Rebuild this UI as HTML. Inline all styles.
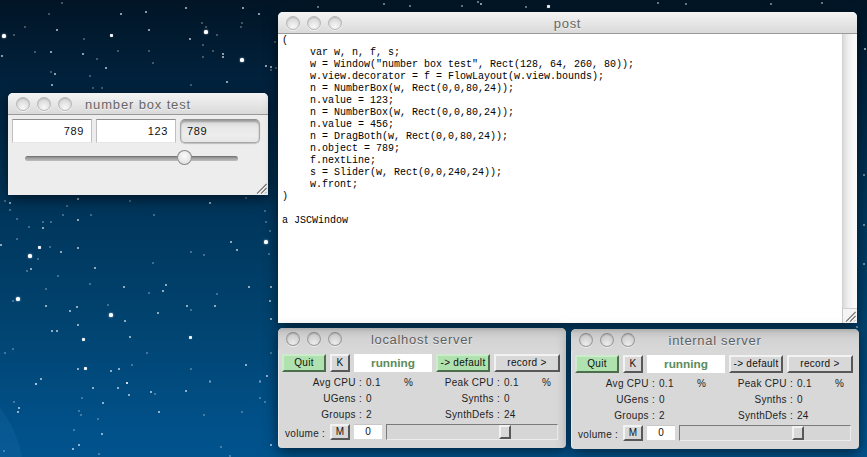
<!DOCTYPE html>
<html><head><meta charset="utf-8">
<style>
*{margin:0;padding:0;box-sizing:border-box}
html,body{width:867px;height:457px;overflow:hidden}
body{position:relative;font-family:"Liberation Sans",sans-serif;
background:linear-gradient(to bottom,#011525 0px,#01203a 70px,#00365c 215px,#01436f 320px,#01518a 430px,#01538d 457px);}
i{position:absolute;background:#fff;border-radius:1px;display:block}
.planet{position:absolute;left:-185px;top:369px;width:208px;height:208px;border-radius:50%;background:rgba(120,180,255,.07)}
.win{position:absolute;border-radius:5px 5px 0 0;box-shadow:0 4px 14px rgba(0,0,0,.55)}
.tb{position:absolute;left:0;top:0;right:0;height:22px;border-radius:5px 5px 0 0;
background:linear-gradient(#f4f4f4,#e6e6e6 50%,#d8d8d8);}
.tbline{position:absolute;left:0;right:0;top:21px;height:1px;background:#9a9a9a}
.ttl{position:absolute;left:0;right:0;top:4px;text-align:center;font-size:13px;color:#676767;letter-spacing:.7px;text-shadow:0 1px 0 rgba(255,255,255,.6)}
.cb{position:absolute;top:4px;width:14px;height:14px;border-radius:50%;border:1px solid #b8b8b8;background:radial-gradient(circle at 50% 80%,#f8f8f8 0,#e4e4e4 45%,#cdcdcd 100%);box-shadow:inset 0 1px 1px rgba(0,0,0,.14),0 1px 0 rgba(255,255,255,.6)}
.code{position:absolute;tab-size:28px;-moz-tab-size:28px;font-family:"Liberation Mono",monospace;font-size:10px;line-height:12px;white-space:pre;color:#000}
.btn{position:absolute;white-space:nowrap;overflow:hidden;height:18px;font-size:10px;letter-spacing:.3px;text-align:center;line-height:14px;color:#111;border-top:2px solid #f2f2f2;border-left:2px solid #f2f2f2;border-right:2px solid #585858;border-bottom:2px solid #585858;background:#d8d8d8}
.btn.g{background:#afe2af;border-top-color:#cdeccd;border-left-color:#cdeccd;border-right-color:#4c6e4c;border-bottom-color:#4c6e4c}
.lbl{position:absolute;font-size:10px;letter-spacing:.3px;color:#1e1e1e;line-height:14px;white-space:nowrap}
.r{text-align:right}.r{letter-spacing:.3px}
.srv{width:288px;height:120px;background:#d8d8d8;border-radius:5px 5px 4px 4px;box-shadow:0 4px 14px rgba(0,0,0,.55),inset 2px 0 1px -1px rgba(255,255,255,.45)}
.stb{position:absolute;left:0;top:0;right:0;height:22px;border-radius:5px 5px 0 0;background:linear-gradient(#acacac,#c6c6c6 4px,#d3d3d3 10px,#d8d8d8 22px)}
.run{position:absolute;left:76px;top:26px;width:78px;height:18px;background:#fff;color:#5a8c5a;font-size:11.8px;font-weight:bold;text-align:center;line-height:18px}
.vnum{position:absolute;left:76px;top:96px;width:28px;height:15px;background:#fff;border-top:1px solid #c8c8c8;font-size:10px;text-align:center;line-height:14px;color:#111}
.vsl{position:absolute;left:108px;top:96px;width:172px;height:16px;background:#d6d6d6;border-top:1px solid #7a7a7a;border-left:1px solid #7a7a7a;border-right:1px solid #ececec;border-bottom:1px solid #ececec}
.cbs{border-color:#9a9a9a;border-top-color:#888;background:radial-gradient(circle at 50% 85%,#ececec 0,#d6d6d6 50%,#c2c2c2 100%)}
</style></head><body>

<!-- stars -->
<div class="planet"></div>
<i style="left:1.7px;top:33.8px;width:4px;height:4px;opacity:1.0;border-radius:40%;box-shadow:0 0 2px rgba(220,235,255,.8)"></i>
<i style="left:12.5px;top:34.0px;width:2px;height:2px;opacity:0.35;"></i>
<i style="left:23.5px;top:25.6px;width:2px;height:2px;opacity:0.35;"></i>
<i style="left:47.9px;top:12.5px;width:2px;height:2px;opacity:0.35;"></i>
<i style="left:61.0px;top:1.9px;width:2px;height:2px;opacity:0.35;"></i>
<i style="left:55.5px;top:28.5px;width:2px;height:2px;opacity:0.75;"></i>
<i style="left:119.6px;top:12.5px;width:2px;height:2px;opacity:0.75;"></i>
<i style="left:110.1px;top:34.3px;width:3px;height:3px;opacity:0.95;box-shadow:0 0 1px rgba(220,235,255,.7)"></i>
<i style="left:83.2px;top:37.5px;width:2px;height:2px;opacity:0.35;"></i>
<i style="left:1.0px;top:55.0px;width:2px;height:2px;opacity:0.75;"></i>
<i style="left:34.3px;top:51.0px;width:2px;height:2px;opacity:0.35;"></i>
<i style="left:50.0px;top:51.4px;width:2px;height:2px;opacity:0.75;"></i>
<i style="left:82.0px;top:52.6px;width:2px;height:2px;opacity:0.75;"></i>
<i style="left:95.7px;top:57.8px;width:2px;height:2px;opacity:0.35;"></i>
<i style="left:116.5px;top:50.0px;width:2px;height:2px;opacity:0.35;"></i>
<i style="left:105.0px;top:67.2px;width:2px;height:2px;opacity:0.75;"></i>
<i style="left:54.0px;top:73.4px;width:2px;height:2px;opacity:0.75;"></i>
<i style="left:50.0px;top:71.3px;width:2px;height:2px;opacity:0.35;"></i>
<i style="left:88.8px;top:74.9px;width:2px;height:2px;opacity:0.35;"></i>
<i style="left:51.4px;top:84.2px;width:2px;height:2px;opacity:0.75;"></i>
<i style="left:91.5px;top:87.4px;width:2px;height:2px;opacity:0.35;"></i>
<i style="left:100.9px;top:87.4px;width:2px;height:2px;opacity:0.35;"></i>
<i style="left:144.8px;top:11.0px;width:2px;height:2px;opacity:0.75;"></i>
<i style="left:184.7px;top:7.3px;width:2px;height:2px;opacity:0.75;"></i>
<i style="left:242.0px;top:7.3px;width:2px;height:2px;opacity:0.75;"></i>
<i style="left:258.0px;top:12.5px;width:2px;height:2px;opacity:0.75;"></i>
<i style="left:147.7px;top:28.5px;width:2px;height:2px;opacity:0.75;"></i>
<i style="left:203.5px;top:30.2px;width:4px;height:4px;opacity:1.0;border-radius:40%;box-shadow:0 0 2px rgba(220,235,255,.8)"></i>
<i style="left:201.0px;top:21.5px;width:2px;height:2px;opacity:0.35;"></i>
<i style="left:205.0px;top:25.6px;width:2px;height:2px;opacity:0.35;"></i>
<i style="left:216.0px;top:34.0px;width:2px;height:2px;opacity:0.35;"></i>
<i style="left:239.8px;top:25.6px;width:2px;height:2px;opacity:0.35;"></i>
<i style="left:240.9px;top:21.5px;width:2px;height:2px;opacity:0.35;"></i>
<i style="left:189.0px;top:37.5px;width:2px;height:2px;opacity:0.75;"></i>
<i style="left:147.7px;top:50.0px;width:2px;height:2px;opacity:0.35;"></i>
<i style="left:202.4px;top:44.3px;width:2px;height:2px;opacity:0.35;"></i>
<i style="left:211.8px;top:50.0px;width:2px;height:2px;opacity:0.35;"></i>
<i style="left:222.0px;top:52.6px;width:2px;height:2px;opacity:0.75;"></i>
<i style="left:222.0px;top:55.5px;width:2px;height:2px;opacity:0.75;"></i>
<i style="left:202.4px;top:55.5px;width:2px;height:2px;opacity:0.35;"></i>
<i style="left:151.9px;top:61.8px;width:2px;height:2px;opacity:0.35;"></i>
<i style="left:239.5px;top:58.3px;width:4px;height:4px;opacity:1.0;border-radius:40%;box-shadow:0 0 2px rgba(220,235,255,.8)"></i>
<i style="left:264.8px;top:64.5px;width:2px;height:2px;opacity:0.75;"></i>
<i style="left:270.4px;top:66.0px;width:2px;height:2px;opacity:0.75;"></i>
<i style="left:270.0px;top:68.6px;width:2px;height:2px;opacity:0.35;"></i>
<i style="left:275.0px;top:66.6px;width:2px;height:2px;opacity:0.35;"></i>
<i style="left:274.0px;top:40.6px;width:2px;height:2px;opacity:0.35;"></i>
<i style="left:226.0px;top:80.5px;width:2px;height:2px;opacity:0.75;"></i>
<i style="left:190.0px;top:84.2px;width:2px;height:2px;opacity:0.35;"></i>
<i style="left:28.1px;top:253.9px;width:4px;height:4px;opacity:1.0;border-radius:40%;box-shadow:0 0 2px rgba(220,235,255,.8)"></i>
<i style="left:37.5px;top:245.5px;width:3px;height:3px;opacity:0.95;box-shadow:0 0 1px rgba(220,235,255,.7)"></i>
<i style="left:9.0px;top:201.9px;width:2px;height:2px;opacity:0.75;"></i>
<i style="left:9.4px;top:209.0px;width:2px;height:2px;opacity:0.35;"></i>
<i style="left:3.6px;top:200.2px;width:2px;height:2px;opacity:0.35;"></i>
<i style="left:77.0px;top:197.7px;width:2px;height:2px;opacity:0.75;"></i>
<i style="left:66.0px;top:205.4px;width:2px;height:2px;opacity:0.35;"></i>
<i style="left:61.8px;top:213.8px;width:2px;height:2px;opacity:0.35;"></i>
<i style="left:90.0px;top:213.8px;width:2px;height:2px;opacity:0.35;"></i>
<i style="left:77.0px;top:219.4px;width:2px;height:2px;opacity:0.75;"></i>
<i style="left:15.6px;top:218.0px;width:2px;height:2px;opacity:0.35;"></i>
<i style="left:27.7px;top:225.6px;width:2px;height:2px;opacity:0.35;"></i>
<i style="left:42.2px;top:221.4px;width:2px;height:2px;opacity:0.35;"></i>
<i style="left:50.0px;top:221.4px;width:2px;height:2px;opacity:0.35;"></i>
<i style="left:42.2px;top:226.8px;width:2px;height:2px;opacity:0.75;"></i>
<i style="left:15.6px;top:237.7px;width:2px;height:2px;opacity:0.35;"></i>
<i style="left:0.0px;top:244.3px;width:2px;height:2px;opacity:0.75;"></i>
<i style="left:49.0px;top:245.6px;width:2px;height:2px;opacity:0.35;"></i>
<i style="left:59.7px;top:251.2px;width:2px;height:2px;opacity:0.75;"></i>
<i style="left:77.0px;top:247.0px;width:2px;height:2px;opacity:0.75;"></i>
<i style="left:36.8px;top:258.0px;width:2px;height:2px;opacity:0.35;"></i>
<i style="left:29.8px;top:268.4px;width:2px;height:2px;opacity:0.75;"></i>
<i style="left:26.0px;top:269.9px;width:2px;height:2px;opacity:0.35;"></i>
<i style="left:56.8px;top:275.0px;width:2px;height:2px;opacity:0.35;"></i>
<i style="left:94.2px;top:267.2px;width:2px;height:2px;opacity:0.75;"></i>
<i style="left:88.8px;top:283.0px;width:2px;height:2px;opacity:0.35;"></i>
<i style="left:122.7px;top:285.5px;width:2px;height:2px;opacity:0.75;"></i>
<i style="left:44.7px;top:287.5px;width:2px;height:2px;opacity:0.35;"></i>
<i style="left:129.0px;top:200.2px;width:2px;height:2px;opacity:0.35;"></i>
<i style="left:263.8px;top:239.8px;width:4px;height:4px;opacity:1.0;border-radius:40%;box-shadow:0 0 2px rgba(220,235,255,.8)"></i>
<i style="left:208.6px;top:201.9px;width:2px;height:2px;opacity:0.75;"></i>
<i style="left:152.5px;top:213.8px;width:2px;height:2px;opacity:0.35;"></i>
<i style="left:263.7px;top:209.6px;width:2px;height:2px;opacity:0.35;"></i>
<i style="left:264.8px;top:221.4px;width:2px;height:2px;opacity:0.35;"></i>
<i style="left:269.0px;top:229.8px;width:2px;height:2px;opacity:0.35;"></i>
<i style="left:230.0px;top:240.8px;width:2px;height:2px;opacity:0.75;"></i>
<i style="left:235.7px;top:248.5px;width:2px;height:2px;opacity:0.75;"></i>
<i style="left:190.0px;top:251.2px;width:2px;height:2px;opacity:0.35;"></i>
<i style="left:203.4px;top:253.9px;width:2px;height:2px;opacity:0.35;"></i>
<i style="left:267.5px;top:252.6px;width:2px;height:2px;opacity:0.35;"></i>
<i style="left:151.5px;top:261.6px;width:2px;height:2px;opacity:0.35;"></i>
<i style="left:165.0px;top:284.4px;width:2px;height:2px;opacity:0.75;"></i>
<i style="left:247.5px;top:285.5px;width:2px;height:2px;opacity:0.75;"></i>
<i style="left:270.0px;top:285.5px;width:2px;height:2px;opacity:0.75;"></i>
<i style="left:245.0px;top:196.5px;width:2px;height:2px;opacity:0.35;"></i>
<i style="left:15.7px;top:296.7px;width:4px;height:4px;opacity:1.0;border-radius:40%;box-shadow:0 0 2px rgba(220,235,255,.8)"></i>
<i style="left:11.5px;top:300.4px;width:2px;height:2px;opacity:0.35;"></i>
<i style="left:44.7px;top:304.6px;width:2px;height:2px;opacity:0.75;"></i>
<i style="left:68.6px;top:309.8px;width:2px;height:2px;opacity:0.75;"></i>
<i style="left:75.5px;top:305.6px;width:2px;height:2px;opacity:0.75;"></i>
<i style="left:107.0px;top:303.6px;width:2px;height:2px;opacity:0.35;"></i>
<i style="left:108.6px;top:313.0px;width:4px;height:4px;opacity:1.0;border-radius:40%;box-shadow:0 0 2px rgba(220,235,255,.8)"></i>
<i style="left:123.7px;top:320.2px;width:2px;height:2px;opacity:0.75;"></i>
<i style="left:77.0px;top:324.3px;width:2px;height:2px;opacity:0.75;"></i>
<i style="left:51.4px;top:329.7px;width:2px;height:2px;opacity:0.75;"></i>
<i style="left:55.5px;top:329.7px;width:2px;height:2px;opacity:0.75;"></i>
<i style="left:81.7px;top:338.4px;width:3px;height:3px;opacity:0.95;box-shadow:0 0 1px rgba(220,235,255,.7)"></i>
<i style="left:129.0px;top:336.4px;width:2px;height:2px;opacity:0.75;"></i>
<i style="left:11.5px;top:348.3px;width:2px;height:2px;opacity:0.35;"></i>
<i style="left:3.6px;top:352.4px;width:2px;height:2px;opacity:0.35;"></i>
<i style="left:83.7px;top:367.1px;width:3px;height:3px;opacity:0.95;box-shadow:0 0 1px rgba(220,235,255,.7)"></i>
<i style="left:77.0px;top:367.6px;width:2px;height:2px;opacity:0.75;"></i>
<i style="left:110.2px;top:369.7px;width:2px;height:2px;opacity:0.75;"></i>
<i style="left:118.0px;top:367.6px;width:2px;height:2px;opacity:0.75;"></i>
<i style="left:131.0px;top:364.3px;width:2px;height:2px;opacity:0.35;"></i>
<i style="left:39.5px;top:378.0px;width:2px;height:2px;opacity:0.75;"></i>
<i style="left:125.8px;top:381.5px;width:2px;height:2px;opacity:0.75;"></i>
<i style="left:35.4px;top:383.0px;width:2px;height:2px;opacity:0.35;"></i>
<i style="left:147.7px;top:291.5px;width:2px;height:2px;opacity:0.35;"></i>
<i style="left:162.3px;top:290.0px;width:2px;height:2px;opacity:0.75;"></i>
<i style="left:215.5px;top:292.7px;width:2px;height:2px;opacity:0.35;"></i>
<i style="left:269.0px;top:300.4px;width:2px;height:2px;opacity:0.75;"></i>
<i style="left:186.4px;top:304.6px;width:2px;height:2px;opacity:0.75;"></i>
<i style="left:190.0px;top:308.8px;width:2px;height:2px;opacity:0.35;"></i>
<i style="left:214.3px;top:304.6px;width:2px;height:2px;opacity:0.75;"></i>
<i style="left:156.7px;top:312.3px;width:2px;height:2px;opacity:0.75;"></i>
<i style="left:270.0px;top:317.7px;width:2px;height:2px;opacity:0.75;"></i>
<i style="left:188.5px;top:335.9px;width:3px;height:3px;opacity:0.95;box-shadow:0 0 1px rgba(220,235,255,.7)"></i>
<i style="left:146.3px;top:352.4px;width:2px;height:2px;opacity:0.35;"></i>
<i style="left:270.0px;top:352.4px;width:2px;height:2px;opacity:0.35;"></i>
<i style="left:245.4px;top:364.3px;width:2px;height:2px;opacity:0.75;"></i>
<i style="left:190.0px;top:368.4px;width:2px;height:2px;opacity:0.35;"></i>
<i style="left:265.8px;top:375.3px;width:2px;height:2px;opacity:0.75;"></i>
<i style="left:208.6px;top:380.0px;width:2px;height:2px;opacity:0.35;"></i>
<i style="left:258.5px;top:380.0px;width:2px;height:2px;opacity:0.35;"></i>
<i style="left:35.2px;top:383.2px;width:2px;height:2px;opacity:0.75;"></i>
<i style="left:92.4px;top:387.0px;width:2px;height:2px;opacity:0.75;"></i>
<i style="left:116.8px;top:387.0px;width:2px;height:2px;opacity:0.75;"></i>
<i style="left:126.0px;top:382.0px;width:2px;height:2px;opacity:0.75;"></i>
<i style="left:127.8px;top:393.8px;width:2px;height:2px;opacity:0.75;"></i>
<i style="left:80.6px;top:396.7px;width:2px;height:2px;opacity:0.35;"></i>
<i style="left:102.0px;top:401.7px;width:2px;height:2px;opacity:0.75;"></i>
<i style="left:12.5px;top:400.5px;width:2px;height:2px;opacity:0.35;"></i>
<i style="left:17.9px;top:407.3px;width:2px;height:2px;opacity:0.75;"></i>
<i style="left:16.7px;top:411.3px;width:2px;height:2px;opacity:0.75;"></i>
<i style="left:78.0px;top:410.0px;width:2px;height:2px;opacity:0.35;"></i>
<i style="left:79.8px;top:414.0px;width:2px;height:2px;opacity:0.35;"></i>
<i style="left:96.6px;top:417.7px;width:2px;height:2px;opacity:0.35;"></i>
<i style="left:73.0px;top:428.7px;width:2px;height:2px;opacity:0.35;"></i>
<i style="left:100.9px;top:432.5px;width:2px;height:2px;opacity:0.75;"></i>
<i style="left:77.8px;top:444.3px;width:2px;height:2px;opacity:0.75;"></i>
<i style="left:71.7px;top:448.4px;width:2px;height:2px;opacity:0.75;"></i>
<i style="left:3.2px;top:449.7px;width:2px;height:2px;opacity:0.35;"></i>
<i style="left:98.3px;top:453.0px;width:2px;height:2px;opacity:0.35;"></i>
<i style="left:150.0px;top:391.0px;width:2px;height:2px;opacity:0.75;"></i>
<i style="left:154.0px;top:392.5px;width:2px;height:2px;opacity:0.35;"></i>
<i style="left:184.8px;top:390.0px;width:2px;height:2px;opacity:0.75;"></i>
<i style="left:208.9px;top:380.7px;width:2px;height:2px;opacity:0.35;"></i>
<i style="left:258.5px;top:380.7px;width:2px;height:2px;opacity:0.35;"></i>
<i style="left:259.4px;top:396.7px;width:2px;height:2px;opacity:0.35;"></i>
<i style="left:263.6px;top:400.5px;width:2px;height:2px;opacity:0.35;"></i>
<i style="left:157.9px;top:411.3px;width:2px;height:2px;opacity:0.75;"></i>
<i style="left:203.3px;top:413.5px;width:2px;height:2px;opacity:0.35;"></i>
<i style="left:240.9px;top:411.0px;width:2px;height:2px;opacity:0.35;"></i>
<i style="left:219.5px;top:445.5px;width:2px;height:2px;opacity:0.35;"></i>
<i style="left:270.0px;top:444.3px;width:2px;height:2px;opacity:0.75;"></i>
<i style="left:229.0px;top:455.0px;width:2px;height:2px;opacity:0.35;"></i>
<i style="left:863.5px;top:48.0px;width:2px;height:2px;opacity:0.75;"></i>
<i style="left:863.0px;top:174.0px;width:2px;height:2px;opacity:0.55;"></i>
<i style="left:863.0px;top:224.0px;width:2px;height:2px;opacity:0.55;"></i>
<i style="left:863.0px;top:263.0px;width:2px;height:2px;opacity:0.55;"></i>
<i style="left:317.4px;top:6.0px;width:2px;height:2px;opacity:0.55;"></i>
<i style="left:383.0px;top:3.0px;width:2px;height:2px;opacity:0.55;"></i>
<i style="left:409.0px;top:5.0px;width:2px;height:2px;opacity:0.55;"></i>
<i style="left:461.0px;top:5.0px;width:2px;height:2px;opacity:0.55;"></i>
<i style="left:476.6px;top:0.7px;width:2px;height:2px;opacity:0.55;"></i>
<i style="left:480.0px;top:3.0px;width:2px;height:2px;opacity:0.75;"></i>
<i style="left:525.0px;top:6.0px;width:2px;height:2px;opacity:0.55;"></i>
<i style="left:547.0px;top:4.7px;width:3px;height:3px;opacity:0.95;box-shadow:0 0 1px rgba(220,235,255,.7)"></i>
<i style="left:656.5px;top:1.8px;width:2px;height:2px;opacity:0.55;"></i>
<i style="left:685.0px;top:2.5px;width:2px;height:2px;opacity:0.55;"></i>
<i style="left:770.0px;top:2.5px;width:2px;height:2px;opacity:0.55;"></i>
<i style="left:821.0px;top:1.8px;width:2px;height:2px;opacity:0.55;"></i>
<i style="left:855.6px;top:325.7px;width:2px;height:2px;opacity:0.55;"></i>
<!-- number box test window -->
<div class="win" style="left:8px;top:93px;width:260px;height:102px;background:#ededed">
  <div class="tb"></div><div class="tbline"></div>
  <div class="cb" style="left:8px;top:4px"></div>
  <div class="cb" style="left:29px;top:4px"></div>
  <div class="cb" style="left:50px;top:4px"></div>
  <div class="ttl" style="letter-spacing:.85px">number box test</div>
  <!-- number boxes -->
  <div style="position:absolute;left:4px;top:26px;width:80px;height:24px;background:#fff;border:1px solid #c0c0c0;border-top-color:#8e8e8e;border-bottom-color:#e6e6e6;font-size:11px;letter-spacing:.6px;text-align:right;padding-right:7px;line-height:23px;color:#111">789</div>
  <div style="position:absolute;left:88px;top:26px;width:80px;height:24px;background:#fff;border:1px solid #c0c0c0;border-top-color:#8e8e8e;border-bottom-color:#e6e6e6;font-size:11px;letter-spacing:.6px;text-align:right;padding-right:7px;line-height:23px;color:#111">123</div>
  <div style="position:absolute;left:172px;top:26px;width:80px;height:24px;border-radius:5px;background:linear-gradient(#d6d6d6,#e8e8e8 35%,#ededed 70%,#e6e6e6);box-shadow:inset 0 2px 2px rgba(0,0,0,.28),0 1px 1px rgba(0,0,0,.2);border:1px solid #a8a8a8;border-top-color:#909090;font-size:11px;letter-spacing:.6px;padding-left:6px;line-height:23px;color:#111">789</div>
  <!-- slider -->
  <div style="position:absolute;left:17px;top:63px;width:213px;height:5px;border-radius:3px;background:linear-gradient(#6a6a6a,#9a9a9a 35%,#aeaeae 70%,#bdbdbd)"></div>
  <div style="position:absolute;left:169px;top:57px;width:15px;height:15px;border-radius:50%;background:radial-gradient(circle at 50% 40%,#fafafa 0,#e8e8e8 50%,#cfcfcf 100%);box-shadow:inset 0 0 0 1px #8a8a8a"></div>
  <!-- grip -->
  <svg style="position:absolute;right:0;bottom:0" width="12" height="12"><path d="M1.6 11.4 L11 2 M5.6 11.4 L11 6 M9.6 11.4 L11 10" stroke="#fff" stroke-opacity=".8" stroke-width="1"/><path d="M1 10.6 L10.6 1 M5 10.6 L10.6 5" stroke="#6e6e6e" stroke-width="1.1"/><path d="M9 10.6 L10.6 9" stroke="#b0b0b0" stroke-width="1"/></svg>
</div>

<!-- post window -->
<div class="win" style="left:278px;top:12px;width:579px;height:311px;background:#fff">
  <div class="tb"></div><div class="tbline"></div>
  <div class="cb" style="left:8px;top:4px"></div>
  <div class="cb" style="left:29px;top:4px"></div>
  <div class="cb" style="left:50px;top:4px"></div>
  <div class="ttl">post</div>
  <div style="position:absolute;left:564px;top:22px;width:15px;bottom:15px;background:linear-gradient(to right,#dadada,#eeeeee 35%,#f8f8f8 70%,#fbfbfb);border-left:1px solid #d2d2d2"></div>
  <div style="position:absolute;left:564px;bottom:0;width:15px;height:15px;background:#f4f4f4;border-left:1px solid #c8c8c8;border-top:1px solid #d0d0d0"></div>
  <svg style="position:absolute;right:0;bottom:0" width="12" height="12"><path d="M1.6 11.4 L11 2 M5.6 11.4 L11 6 M9.6 11.4 L11 10" stroke="#fff" stroke-opacity=".8" stroke-width="1"/><path d="M1 10.6 L10.6 1 M5 10.6 L10.6 5" stroke="#6e6e6e" stroke-width="1.1"/><path d="M9 10.6 L10.6 9" stroke="#b0b0b0" stroke-width="1"/></svg>
  <div class="code" style="left:4px;top:23px">(
	var w, n, f, s;
	w = Window("number box test", Rect(128, 64, 260, 80));
	w.view.decorator = f = FlowLayout(w.view.bounds);
	n = NumberBox(w, Rect(0,0,80,24));
	n.value = 123;
	n = NumberBox(w, Rect(0,0,80,24));
	n.value = 456;
	n = DragBoth(w, Rect(0,0,80,24));
	n.object = 789;
	f.nextLine;
	s = Slider(w, Rect(0,0,240,24));
	w.front;
)

a JSCWindow</div>
</div>

<div class="win srv" style="left:278px;top:328px">
<div class="stb"></div>
<div class="cb cbs" style="left:8px;top:4px"></div>
<div class="cb cbs" style="left:29px;top:4px"></div>
<div class="cb cbs" style="left:50px;top:4px"></div>
<div class="ttl" style="color:#5e5e5e">localhost server</div>
<div class="btn g" style="left:4px;top:26px;width:44px">Quit</div>
<div class="btn" style="left:52px;top:26px;width:20px">K</div>
<div class="run">running</div>
<div class="btn g" style="left:158px;top:26px;width:54px">-&gt; default</div>
<div class="btn" style="left:216px;top:26px;width:66px">record &gt;</div>
<div class="lbl r" style="left:4px;top:48px;width:80px">Avg CPU :</div>
<div class="lbl" style="left:88px;top:48px">0.1</div>
<div class="lbl" style="left:126px;top:48px">%</div>
<div class="lbl r" style="left:142px;top:48px;width:80px">Peak CPU :</div>
<div class="lbl" style="left:226px;top:48px">0.1</div>
<div class="lbl" style="left:264px;top:48px">%</div>
<div class="lbl r" style="left:4px;top:64px;width:80px">UGens :</div>
<div class="lbl" style="left:88px;top:64px">0</div>
<div class="lbl r" style="left:142px;top:64px;width:80px">Synths :</div>
<div class="lbl" style="left:226px;top:64px">0</div>
<div class="lbl r" style="left:4px;top:80px;width:80px">Groups :</div>
<div class="lbl" style="left:88px;top:80px">2</div>
<div class="lbl r" style="left:142px;top:80px;width:80px">SynthDefs :</div>
<div class="lbl" style="left:226px;top:80px">24</div>
<div class="lbl" style="left:7px;top:98.5px">volume :</div>
<div class="btn" style="left:52px;top:96px;width:20px;height:16px;line-height:12px">M</div>
<div class="vnum">0</div>
<div class="vsl"></div>
<div class="btn" style="left:221px;top:97px;width:12px;height:14px"></div>
</div>
<div class="win srv" style="left:571px;top:329px">
<div class="stb"></div>
<div class="cb cbs" style="left:8px;top:4px"></div>
<div class="cb cbs" style="left:29px;top:4px"></div>
<div class="cb cbs" style="left:50px;top:4px"></div>
<div class="ttl" style="color:#5e5e5e">internal server</div>
<div class="btn g" style="left:4px;top:26px;width:44px">Quit</div>
<div class="btn" style="left:52px;top:26px;width:20px">K</div>
<div class="run">running</div>
<div class="btn" style="left:158px;top:26px;width:54px">-&gt; default</div>
<div class="btn" style="left:216px;top:26px;width:66px">record &gt;</div>
<div class="lbl r" style="left:4px;top:48px;width:80px">Avg CPU :</div>
<div class="lbl" style="left:88px;top:48px">0.1</div>
<div class="lbl" style="left:126px;top:48px">%</div>
<div class="lbl r" style="left:142px;top:48px;width:80px">Peak CPU :</div>
<div class="lbl" style="left:226px;top:48px">0.1</div>
<div class="lbl" style="left:264px;top:48px">%</div>
<div class="lbl r" style="left:4px;top:64px;width:80px">UGens :</div>
<div class="lbl" style="left:88px;top:64px">0</div>
<div class="lbl r" style="left:142px;top:64px;width:80px">Synths :</div>
<div class="lbl" style="left:226px;top:64px">0</div>
<div class="lbl r" style="left:4px;top:80px;width:80px">Groups :</div>
<div class="lbl" style="left:88px;top:80px">2</div>
<div class="lbl r" style="left:142px;top:80px;width:80px">SynthDefs :</div>
<div class="lbl" style="left:226px;top:80px">24</div>
<div class="lbl" style="left:7px;top:98.5px">volume :</div>
<div class="btn" style="left:52px;top:96px;width:20px;height:16px;line-height:12px">M</div>
<div class="vnum">0</div>
<div class="vsl"></div>
<div class="btn" style="left:221px;top:97px;width:12px;height:14px"></div>
</div>
</body></html>
